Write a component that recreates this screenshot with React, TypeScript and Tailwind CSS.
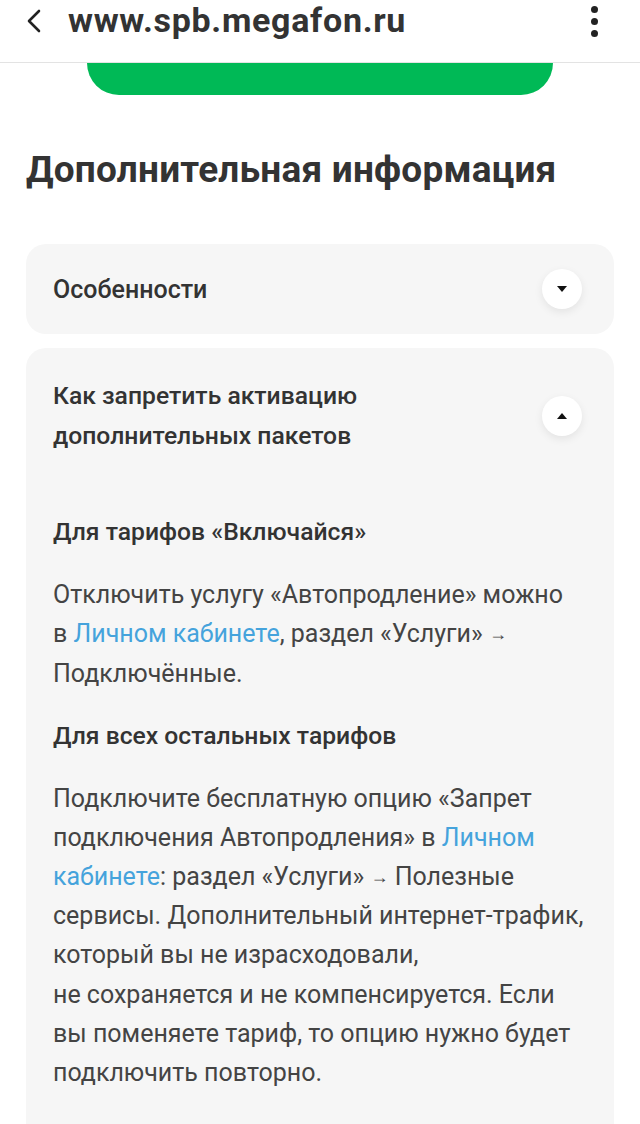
import React from "react";

const font = { fontFamily: "Roboto, 'Noto Sans', sans-serif" };

function Caret({ up }: { up?: boolean }) {
  return (
    <div className="w-[40px] h-[40px] shrink-0 rounded-full bg-white shadow-[0_3px_8px_rgba(0,0,0,0.08)] flex items-center justify-center">
      <svg width="10" height="6" viewBox="0 0 10 6">
        {up ? <path d="M0 6 L5 0 L10 6 Z" fill="#111" /> : <path d="M0 0 L10 0 L5 6 Z" fill="#111" />}
      </svg>
    </div>
  );
}

function Link({ children }: { children: React.ReactNode }) {
  return <span className="text-[#45a3dc]">{children}</span>;
}

function Arrow() {
  return <span className="text-[18px] align-[2px]">→</span>;
}

export default function App() {
  return (
    <div className="w-[640px] h-[1124px] overflow-hidden bg-white text-[#333]" style={font}>
      {/* browser bar */}
      <div className="h-[63px] flex items-start border-b border-[#e3e3e3] bg-white">
        <svg width="16" height="24" viewBox="0 0 16 24" className="ml-[26px] mt-[9px]">
          <path d="M13 2 L3 12 L13 22" fill="none" stroke="#222" strokeWidth="2.6" strokeLinecap="round" strokeLinejoin="round" />
        </svg>
        <div className="ml-[26px] text-[34px] font-bold text-[#333] leading-[40px] tracking-[0.7px]">www.spb.megafon.ru</div>
        <div className="ml-auto mr-[42px] mt-[6px] flex flex-col gap-[5px]">
          <span className="w-[7px] h-[7px] rounded-full bg-[#222]" />
          <span className="w-[7px] h-[7px] rounded-full bg-[#222]" />
          <span className="w-[7px] h-[7px] rounded-full bg-[#222]" />
        </div>
      </div>

      {/* green button bottom edge */}
      <div className="ml-[87px] w-[466px] h-[32px] bg-[#00b956] rounded-b-[32px]" />

      <div className="px-[26px]">
        <h2 className="mt-[51px] text-[37px] font-bold leading-[48px] text-[#333] tracking-[0.2px]">
          Дополнительная информация
        </h2>

        <div className="mt-[50px] h-[90px] rounded-[20px] bg-[#f6f6f6] pl-[27px] pr-[32px] flex items-center justify-between">
          <span className="text-[25px] font-medium leading-[40px] mt-[2px]">Особенности</span>
          <Caret />
        </div>

        <div className="mt-[14px] rounded-t-[20px] bg-[#f6f6f6] pl-[27px] pr-[32px] pt-[28px] pb-[40px]">
          <div className="flex items-center justify-between">
            <div className="text-[24.7px] font-medium leading-[39.5px]">
              Как запретить активацию
              <br />
              дополнительных пакетов
            </div>
            <Caret up />
          </div>

          <div className="mt-[57px] text-[24.7px] font-medium leading-[39.5px]">Для тарифов «Включайся»</div>
          <p className="mt-[23px] text-[25px] leading-[39.5px] text-[#444] whitespace-nowrap">
            Отключить услугу «Автопродление» можно
            <br />
            в <Link>Личном кабинете</Link>, раздел «Услуги» <Arrow />
            <br />
            Подключённые.
          </p>

          <div className="mt-[23px] text-[24.7px] font-medium leading-[39.5px]">Для всех остальных тарифов</div>
          <p className="mt-[23px] text-[25px] leading-[39.2px] text-[#444] whitespace-nowrap">
            Подключите бесплатную опцию «Запрет
            <br />
            подключения Автопродления» в <Link>Личном</Link>
            <br />
            <Link>кабинете</Link>: раздел «Услуги» <Arrow /> Полезные
            <br />
            сервисы. Дополнительный интернет-трафик,
            <br />
            который вы не израсходовали,
            <br />
            не сохраняется и не компенсируется. Если
            <br />
            вы поменяете тариф, то опцию нужно будет
            <br />
            подключить повторно.
          </p>
        </div>
      </div>
    </div>
  );
}
